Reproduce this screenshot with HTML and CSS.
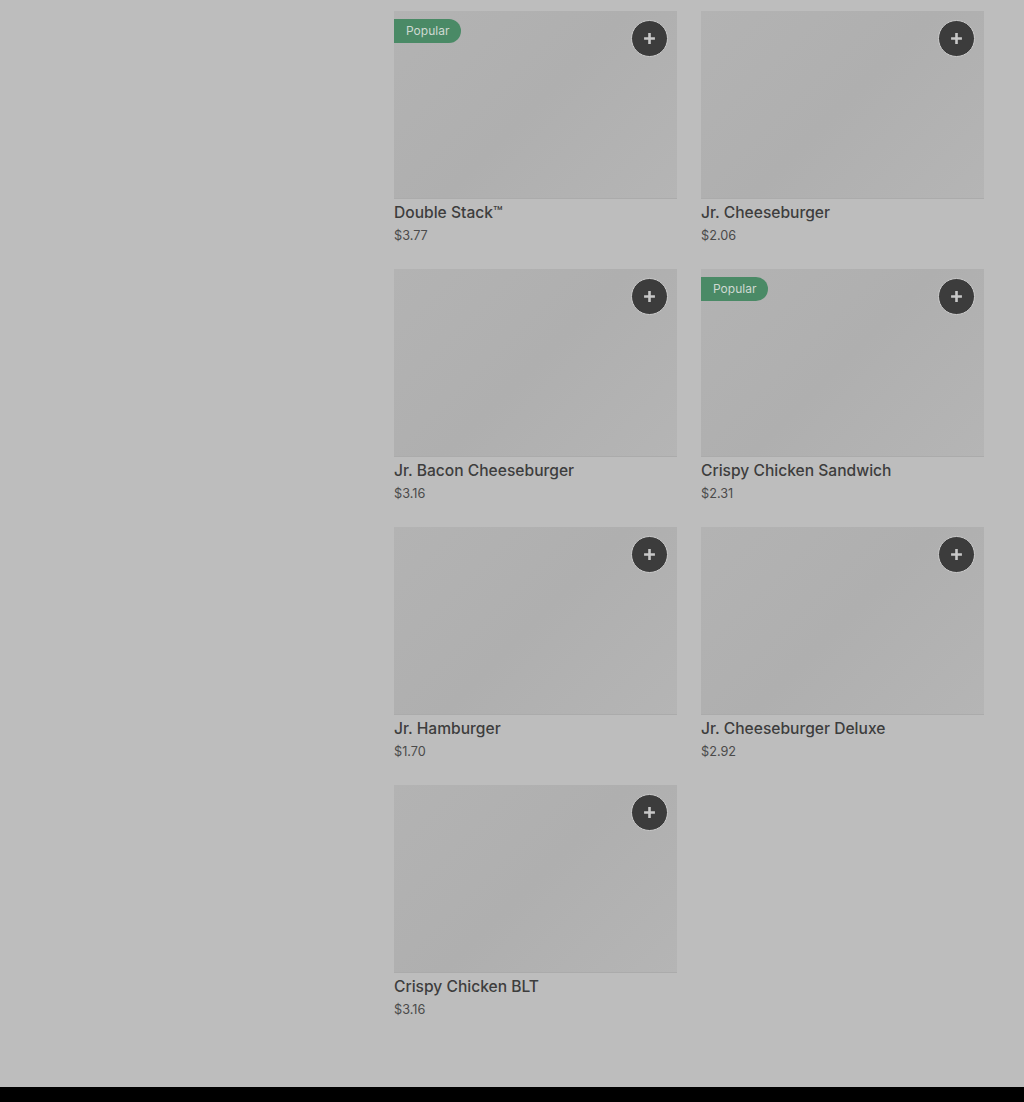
FILE: index.html
```html
<!DOCTYPE html>
<html lang="en">
<head>
    <meta charset="UTF-8">
    <meta name="viewport" content="width=device-width, initial-scale=1.0">
    <title>Menu</title>
    <link rel="stylesheet" href="styles.css">
</head>
<body>
    <div class="page">
        <aside class="sidebar"></aside>

        <main class="menu-grid">
            <div class="item">
                <div class="photo">
                    <span class="badge">Popular</span>
                    <button class="add"><svg viewBox="0 0 12 12"><path d="M6 1v10M1 6h10"/></svg></button>
                </div>
                <div class="name">Double Stack™</div>
                <div class="price">$3.77</div>
            </div>
            <div class="item">
                <div class="photo">
                    <button class="add"><svg viewBox="0 0 12 12"><path d="M6 1v10M1 6h10"/></svg></button>
                </div>
                <div class="name">Jr. Cheeseburger</div>
                <div class="price">$2.06</div>
            </div>
            <div class="item">
                <div class="photo">
                    <button class="add"><svg viewBox="0 0 12 12"><path d="M6 1v10M1 6h10"/></svg></button>
                </div>
                <div class="name">Jr. Bacon Cheeseburger</div>
                <div class="price">$3.16</div>
            </div>
            <div class="item">
                <div class="photo">
                    <span class="badge">Popular</span>
                    <button class="add"><svg viewBox="0 0 12 12"><path d="M6 1v10M1 6h10"/></svg></button>
                </div>
                <div class="name">Crispy Chicken Sandwich</div>
                <div class="price">$2.31</div>
            </div>
            <div class="item">
                <div class="photo">
                    <button class="add"><svg viewBox="0 0 12 12"><path d="M6 1v10M1 6h10"/></svg></button>
                </div>
                <div class="name">Jr. Hamburger</div>
                <div class="price">$1.70</div>
            </div>
            <div class="item">
                <div class="photo">
                    <button class="add"><svg viewBox="0 0 12 12"><path d="M6 1v10M1 6h10"/></svg></button>
                </div>
                <div class="name">Jr. Cheeseburger Deluxe</div>
                <div class="price">$2.92</div>
            </div>
            <div class="item">
                <div class="photo">
                    <button class="add"><svg viewBox="0 0 12 12"><path d="M6 1v10M1 6h10"/></svg></button>
                </div>
                <div class="name">Crispy Chicken BLT</div>
                <div class="price">$3.16</div>
            </div>
        </main>
    </div>

    <footer class="footer"></footer>
</body>
</html>
```

FILE: styles.css
```css
body {
    margin: 0;
    background-color: #bdbdbd;
    font-family: Inter, "Noto Sans", Arial, sans-serif;
    color: #3b3b3b;
}
.page {
    display: flex;
    gap: 24px;
    padding: 11px 40px 68px 0;
}
.sidebar {
    width: 370px;
    flex-shrink: 0;
}
.menu-grid {
    flex: 1;
    display: grid;
    grid-template-columns: 283px 283px;
    column-gap: 24px;
    row-gap: 24px;
    align-content: start;
}
.photo {
    position: relative;
    height: 188px;
    background: linear-gradient(135deg, #b3b3b3 0%, #afafaf 50%, #b5b5b5 100%);
    box-shadow: inset 0 -1px 0 #ababab;
}
.badge {
    position: absolute;
    top: 8px;
    left: 0;
    height: 24px;
    line-height: 24px;
    padding: 0 12px;
    background-color: #4a8a66;
    color: #cfd9d2;
    font-size: 12px;
    border-radius: 0 12px 12px 0;
}
.add {
    position: absolute;
    top: 9px;
    right: 9px;
    width: 37px;
    height: 37px;
    border-radius: 50%;
    border: 1px solid #cdcdcd;
    background-color: #3c3c3c;
    padding: 0;
    display: flex;
    align-items: center;
    justify-content: center;
    cursor: pointer;
}
.add svg {
    width: 13px;
    height: 13px;
    stroke: #c8c8c8;
    stroke-width: 2.4;
    fill: none;
}
.name {
    margin-top: 4px;
    font-size: 15.6px;
    font-weight: 500;
    line-height: 20px;
    color: #3d3d3d;
}
.price {
    margin-top: 4px;
    font-size: 12.7px;
    line-height: 18px;
    color: #4a4a4a;
}
.footer {
    height: 15px;
    background-color: #000;
}
```
